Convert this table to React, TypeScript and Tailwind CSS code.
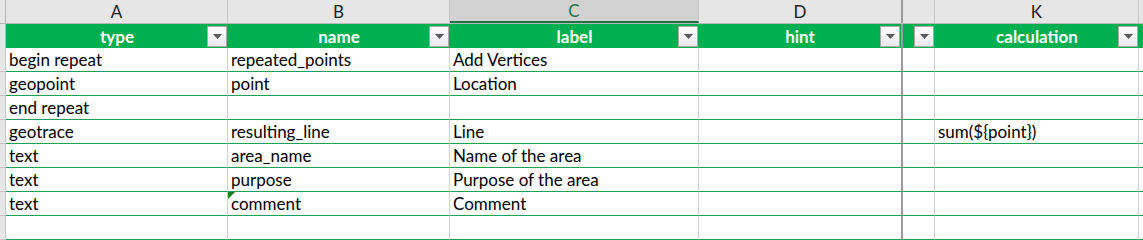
import React from "react";

type Col = { letter: string; w: string; title?: string; selected?: boolean; thick?: boolean };

const cols: Col[] = [
  { letter: "A", w: "w-[222px]", title: "type" },
  { letter: "B", w: "w-[222px]", title: "name" },
  { letter: "C", w: "w-[249px]", title: "label", selected: true },
  { letter: "D", w: "w-[204px]", title: "hint", thick: true },
  { letter: "", w: "w-[32px]", title: "" },
  { letter: "K", w: "w-[204px]", title: "calculation" },
];

const rows: string[][] = [
  ["begin repeat", "repeated_points", "Add Vertices", "", "", ""],
  ["geopoint", "point", "Location", "", "", ""],
  ["end repeat", "", "", "", "", ""],
  ["geotrace", "resulting_line", "Line", "", "", "sum(${point})"],
  ["text", "area_name", "Name of the area", "", "", ""],
  ["text", "purpose", "Purpose of the area", "", "", ""],
  ["text", "comment", "Comment", "", "", ""],
  ["", "", "", "", "", ""],
];

function FilterButton() {
  return (
    <div className="mr-px flex h-[21px] w-[20px] shrink-0 items-center justify-center border border-[#a9a9a9] bg-gradient-to-b from-white to-[#e9e9ee]">
      <svg width="9" height="5" viewBox="0 0 9 5">
        <path d="M0 0h9L4.5 5z" fill="#5a5a5a" />
      </svg>
    </div>
  );
}

export default function App() {
  return (
    <div className="h-[240px] w-[1143px] overflow-hidden bg-white font-['Lato',sans-serif] text-[17px] text-black">
      {/* column letters */}
      <div className="flex h-[24px] border-b border-[#b8b8b8] bg-[#e6e6e6]">
        <div className="w-[6px] shrink-0 border-r border-[#b8b8b8]" />
        {cols.map((c, i) => (
          <div
            key={i}
            className={`flex shrink-0 items-center justify-center pt-px ${c.w} ${
              c.thick ? "border-r-2 border-[#9c9c9c]" : "border-r border-[#c6c6c6]"
            } ${c.selected ? "border-b-2 border-b-[#217346] bg-[#d2d2d2] text-[#217346]" : "text-[#222]"}`}
          >
            {c.letter}
          </div>
        ))}
        <div className="flex-1" />
      </div>

      {/* green table header */}
      <div className="flex h-[24px] bg-[#00b050] font-bold text-white">
        <div className="w-[6px] shrink-0 border-r border-[#b8b8b8] bg-[#e6e6e6]" />
        {cols.map((c, i) => (
          <div
            key={i}
            className={`relative flex shrink-0 items-center justify-end ${c.w} ${
              c.thick ? "border-r-2 border-[#9c9c9c]" : ""
            }`}
          >
            <span className="absolute inset-0 flex items-center justify-center pt-px">{c.title}</span>
            <span className="relative">
              <FilterButton />
            </span>
          </div>
        ))}
        <div className="flex-1" />
      </div>

      {/* data rows */}
      {rows.map((r, ri) => (
        <div key={ri} className="flex h-[24px]">
          <div className="w-[6px] shrink-0 border-r border-b border-[#c6c6c6] bg-[#e6e6e6]" />
          {cols.map((c, ci) => (
            <div
              key={ci}
              className={`relative flex shrink-0 items-end border-b border-b-[#1fa055] pl-[3px] ${c.w} ${
                c.thick ? "border-r-2 border-r-[#9c9c9c]" : "border-r border-r-[#d4d4d4]"
              }`}
            >
              {ri === 6 && ci === 1 && (
                <svg className="absolute left-0 top-0" width="7" height="7" viewBox="0 0 7 7">
                  <path d="M0 0h7L0 7z" fill="#1b7a1b" />
                </svg>
              )}
              <span className="whitespace-nowrap leading-[22px]">{r[ci]}</span>
            </div>
          ))}
          <div className="flex-1 border-b border-[#1fa055]" />
        </div>
      ))}
    </div>
  );
}
